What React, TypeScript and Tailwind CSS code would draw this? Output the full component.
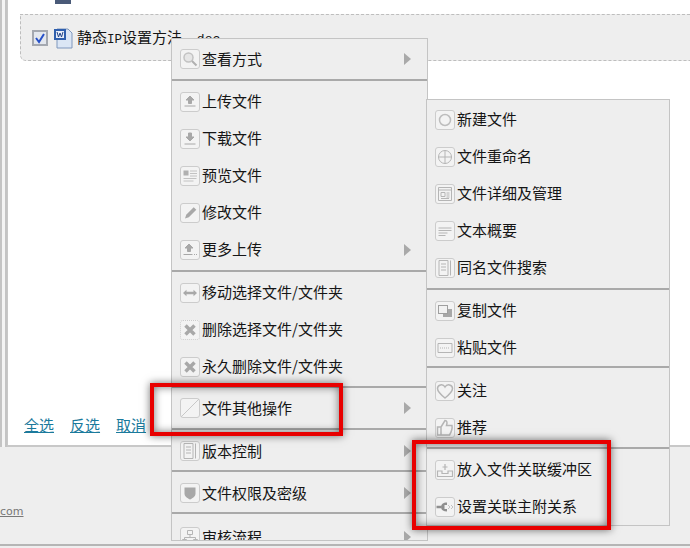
import type { ReactNode } from "react";

const cjk = "font-['Noto_Sans_CJK_SC','Liberation_Sans',sans-serif]";
const s = { fill: "none", stroke: "#b5b5b5", strokeWidth: 1.5 };

const ICONS: Record<string, ReactNode> = {
  search: (
    <>
      <circle cx="8.5" cy="8.5" r="4.5" fill="#e6e6e6" stroke="#c2c2c2" strokeWidth="1.5" />
      <path d="M12 12l4.5 4.5" stroke="#b0b0b0" strokeWidth="2" />
    </>
  ),
  upload: <path d="M10 4l4 4h-2.500v3.500h-3V8H6zM4.500 14h11" fill="#a8a8a8" stroke="#a8a8a8" strokeWidth="1" />,
  download: <path d="M8.500 4h3v4H14l-4 4-4-4h2.500zM4.500 15h11" fill="#a8a8a8" stroke="#a8a8a8" strokeWidth="1" />,
  preview: (
    <>
      <rect x="3.500" y="4.500" width="5" height="5" fill="#b0b0b0" />
      <path d="M10 5h7M10 7.500h7M10 10h7M3.500 12.500h13M3.500 15h10" stroke="#c2c2c2" strokeWidth="1" />
    </>
  ),
  edit: <path d="M5 15.500l1.200-3.800 7.500-7.500 2.600 2.600-7.500 7.500z" fill="#a8a8a8" />,
  more: <path d="M9 4l4 4h-2.500v3.500h-3V8H5zM3.500 14.500h9M14 14.500h1M16 14.500h1" fill="#a8a8a8" stroke="#a8a8a8" strokeWidth="1" />,
  move: <path d="M3 10l3.500-3.200v2h7v-2L17 10l-3.500 3.200v-2h-7v2z" fill="#a8a8a8" />,
  remove: <path d="M5.500 5.500l9 9M14.500 5.500l-9 9" stroke="#a8a8a8" strokeWidth="3.500" />,
  blank: <path d="M1 19L19 1" stroke="#c8c8c8" strokeWidth="1" />,
  page: <path d="M4 2.500h9v15H4zM6 6h5M6 9h5M6 12h5M15.500 2.500v15" {...s} strokeWidth={1} />,
  shield: <path d="M4.500 4.500h11v6c0 3-2.500 4.500-5.500 6-3-1.500-5.500-3-5.500-6z" fill="#a8a8a8" />,
  flow: (
    <path d="M7.500 3.500h5v4h-5zM10 7.500v3M4.500 10.500h11v2M4.500 10.500v2M2.500 12.500h4v4h-4zM13.500 12.500h4v4h-4z" {...s} strokeWidth={1} />
  ),
  circle: <circle cx="10" cy="10" r="5.500" fill="none" stroke="#bdbdbd" strokeWidth="1.500" />,
  rename: <path d="M3.500 10a6.500 6.500 0 1 0 13 0 6.500 6.500 0 1 0-13 0M3.500 10h13M10 3.500v13" {...s} strokeWidth={1} />,
  detail: (
    <path d="M3.500 3.500h13v13h-13zM3.500 6h13M6 8.500h4v4H6zM11.500 9h3M11.500 11h3M11.500 13h3M6 14.500h8" {...s} strokeWidth={1} />
  ),
  text: <path d="M3.500 7h13M3.500 9.500h13M3.500 12h9M3.500 14.500h7" {...s} strokeWidth={1} />,
  copy: (
    <>
      <rect x="8" y="8" width="9" height="8" fill="#a8a8a8" />
      <rect x="3.500" y="4.500" width="9" height="8" fill="#f2f2f2" stroke="#9f9f9f" />
    </>
  ),
  paste: (
    <>
      <path d="M3 5.500h14v9H3z" {...s} strokeWidth={1} />
      <path d="M5 10h10" {...s} strokeWidth={1} strokeDasharray="1 1" />
    </>
  ),
  heart: <path d="M10 17C5 13 2.500 10.500 2.500 7.500 2.500 3.500 8 2.500 10 6c2-3.500 7.500-2.500 7.500 1.500 0 3-2.500 5.500-7.500 9.500z" {...s} />,
  thumb: <path d="M2.500 9h3.500v8H2.500zM6 9l4-6.500c2 0 2.500 2 1.500 5h5.500c.5 3-1 7-2.500 9.500H6" {...s} />,
  pack: <path d="M10 4v6M7.500 7h5M2.500 11h4.500v2.500h6V11h4.500v5.500h-15z" {...s} strokeWidth={1.200} />,
  plug: (
    <>
      <path d="M1.500 10H6" stroke="#8f8f8f" strokeWidth="2.500" />
      <path d="M12 5.500C8 5.500 6 7.500 6 10s2 4.500 6 4.500v-2.500H9.500V8H12z" fill="#8f8f8f" />
      <path d="M13 8l2 2-2 2M16 8l2 2-2 2" {...s} strokeWidth={0.800} />
    </>
  ),
};

function Arrow() {
  return (
    <svg width="7" height="12" viewBox="0 0 7 12" className="absolute left-[232px] top-1/2 -translate-y-1/2">
      <path d="M0 0l7 6-7 6z" fill="#a9a9a9" />
    </svg>
  );
}

function Row({
  icon,
  label,
  arrow,
  dashed,
  h = "h-[37px]",
}: {
  icon: string;
  label: string;
  arrow?: boolean;
  dashed?: boolean;
  h?: string;
}) {
  return (
    <div className={`relative flex items-center gap-[2px] pl-[8px] ${h}`}>
      <span
        className={`flex h-[20px] w-[20px] shrink-0 items-center justify-center rounded-[3px] border border-[#cccccc] bg-[#f3f3f3] ${dashed ? "border-dotted border-[#a5a5a5]" : ""}`}
      >
        <svg width="20" height="20" viewBox="0 0 20 20" className="shrink-0">
          {ICONS[icon]}
        </svg>
      </span>
      <span className="pb-[2px] text-[15px] leading-none whitespace-nowrap text-[#151515]">{label}</span>
      {arrow && <Arrow />}
    </div>
  );
}

export default function App() {
  return (
    <div className={`relative flex h-[548px] w-[690px] flex-col overflow-hidden bg-[#eeeeee] ${cjk}`}>
      {/* file panel */}
      <div className="flex h-[447px] shrink-0">
        <div className="w-[7px] shrink-0 border-x-2 border-[#c4c4c4] bg-[#f4f4f4]" />
        <div className="relative flex flex-1 flex-col border-b-2 border-l border-[#c8c8c8] bg-white pl-[12px]">
          <div className="ml-[35px] h-[4px] w-[16px] bg-[#4a5a78]" />
          <div className="mt-[10px] flex h-[47px] items-center gap-[5px] rounded-bl-[6px] border-t border-b border-l border-dashed border-[#bdbdbd] bg-[#eeeeee] pl-[11px]">
            <span className="flex h-[16px] w-[16px] items-center justify-center border-2 border-[#a4a8b0] bg-[#e3e7ee]">
              <svg width="12" height="12" viewBox="0 0 12 12" className="shrink-0">
                <path d="M2 6l3 4 5-8" fill="none" stroke="#2650c8" strokeWidth="2" />
              </svg>
            </span>
            <svg width="20" height="22" viewBox="0 0 20 22">
              <path d="M4 2h11l4 4v15H4z" fill="#dbe6f5" stroke="#7f97bd" />
              <rect x="1" y="2" width="12" height="11" fill="#2f5fae" />
              <rect x="3" y="4" width="8" height="7" fill="#e8eefa" />
              <path d="M4 5l1.500 5 1.500-4 1.500 4L10 5" fill="none" stroke="#23468a" strokeWidth="1" />
            </svg>
            <span className="-ml-px text-[15px] leading-none whitespace-nowrap text-[#151515]">
              静态<span className="font-['Liberation_Mono'] text-[12.500px]">IP</span>设置方法
              <span className="ml-[7px] font-['Liberation_Mono'] text-[13px]">.doc</span>
            </span>
          </div>
          <div className="mt-auto mb-[9px] ml-[4px] flex gap-[16px] text-[15px] leading-[22px] text-[#1b7a9c] underline">
            <span>全选</span>
            <span>反选</span>
            <span>取消</span>
          </div>
        </div>
      </div>

      {/* footer */}
      <div className="flex flex-1 flex-col">
        <div className="mt-auto mb-[2px] h-[2px] bg-[#b5b5b5]" />
      </div>
      <span className="absolute top-[505px] left-0 font-['DejaVu_Sans'] text-[11px] leading-[14px] text-[#777777] underline">
        com
      </span>

      {/* context menu */}
      <div className="absolute top-[38px] left-[171px] h-[503px] w-[257px] overflow-hidden border border-[#c4c4c4] bg-[#eeeeee]">
        <div className="border-b-2 border-[#a9a9a9]">
          <Row icon="search" label="查看方式" arrow h="h-[40px]" />
        </div>
        <div className="border-b-2 border-[#a9a9a9] py-[2px]">
          <Row icon="upload" label="上传文件" />
          <Row icon="download" label="下载文件" />
          <Row icon="preview" label="预览文件" />
          <Row icon="edit" label="修改文件" />
          <Row icon="more" label="更多上传" arrow />
        </div>
        <div className="border-b-2 border-[#a9a9a9] pt-[2px] pb-[1px]">
          <Row icon="move" label="移动选择文件/文件夹" />
          <Row icon="remove" label="删除选择文件/文件夹" dashed />
          <Row icon="remove" label="永久删除文件/文件夹" />
        </div>
        <div className="border-b-2 border-[#a9a9a9]">
          <Row icon="blank" label="文件其他操作" arrow h="h-[40px]" />
        </div>
        <div className="border-b-2 border-[#a9a9a9] pt-[2px]">
          <Row icon="page" label="版本控制" arrow h="h-[38px]" />
        </div>
        <div className="border-b-2 border-[#a9a9a9] pt-[2px]">
          <Row icon="shield" label="文件权限及密级" arrow h="h-[38px]" />
        </div>
        <div className="pt-[4px]">
          <Row icon="flow" label="审核流程" arrow h="h-[38px]" />
        </div>
      </div>

      {/* sub menu */}
      <div className="absolute top-[99px] left-[426px] h-[427px] w-[244px] border border-[#c4c4c4] bg-[#eeeeee]">
        <div className="border-b-2 border-[#a9a9a9] pt-[1px] pb-[2px]">
          <Row icon="circle" label="新建文件" />
          <Row icon="rename" label="文件重命名" />
          <Row icon="detail" label="文件详细及管理" />
          <Row icon="text" label="文本概要" />
          <Row icon="page" label="同名文件搜索" />
        </div>
        <div className="border-b-2 border-[#a9a9a9] pt-[2px]">
          <Row icon="copy" label="复制文件" />
          <Row icon="paste" label="粘贴文件" />
        </div>
        <div className="border-b-2 border-[#a9a9a9] pt-[4px] pb-[1px]">
          <Row icon="heart" label="关注" />
          <Row icon="thumb" label="推荐" />
        </div>
        <div className="pt-[2px]">
          <Row icon="pack" label="放入文件关联缓冲区" />
          <Row icon="plug" label="设置关联主附关系" />
        </div>
      </div>

      {/* red annotations */}
      <div className="absolute top-[383px] left-[150px] h-[53px] w-[193px] border-[4px] border-[#e80000] shadow-[0_0_8px_rgba(0,0,0,0.55),inset_0_0_8px_rgba(0,0,0,0.55)]" />
      <div className="absolute top-[440px] left-[412px] h-[90px] w-[199px] border-[4px] border-[#e80000] shadow-[0_0_8px_rgba(0,0,0,0.55),inset_0_0_8px_rgba(0,0,0,0.55)]" />
    </div>
  );
}
